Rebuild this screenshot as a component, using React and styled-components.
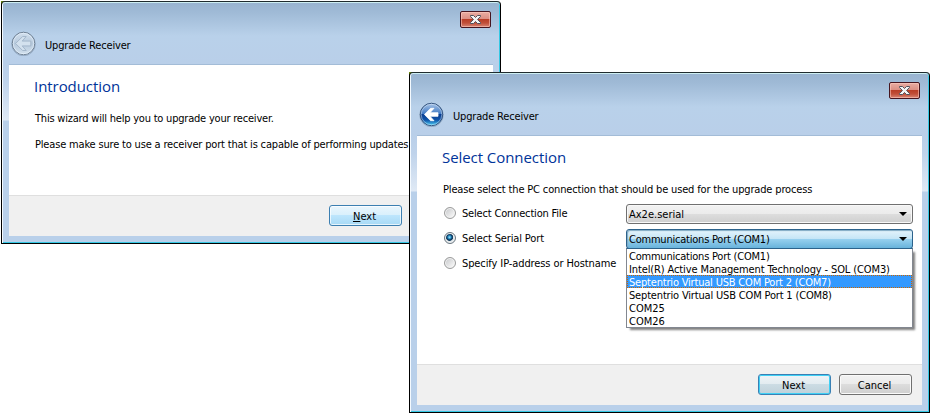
import React from "react";
import styled, { createGlobalStyle, css } from "styled-components";

const GlobalStyle = createGlobalStyle`
  * { box-sizing: border-box; }
  body { margin: 0; background: #fff; overflow: hidden; }
`;

const Desktop = styled.main`
  position: relative;
  width: 931px;
  height: 414px;
  font: 11px/14px "DejaVu Sans Condensed", "DejaVu Sans", sans-serif;
  color: #000;
  white-space: pre;
`;

const Window = styled.section`
  position: absolute;
  left: ${(p) => p.$x}px;
  top: ${(p) => p.$y}px;
  width: ${(p) => p.$w}px;
  height: ${(p) => p.$h}px;
  display: flex;
  flex-direction: column;
  padding: 0 7px 7px;
  border: 1px solid #000;
  border-top-color: #1f2b2e;
  border-radius: 4px 4px 0 0;
  background: linear-gradient(
    #98b3d0 0,
    #9fbad6 10px,
    #b9d1ea 34px,
    #b9cfe9 62px,
    #bfd3eb 80px,
    #dfe9f5 118px,
    #b9d0ea 119px
  );
  box-shadow: inset 1px 0 #f4faff, inset 0 1px #cdeef2, inset -1px 0 #35c8e4, inset 0 -1px #35c8e4;
`;

const CornerPatch = styled.i`
  position: absolute;
  left: ${(p) => p.$x}px;
  top: ${(p) => p.$y}px;
  width: 4px;
  height: 4px;
  background: #71900d;
`;

const Header = styled.header`
  display: flex;
  flex-direction: column;
  height: 62px;
  padding: 9px 2px 0;
`;

const CloseButton = styled.button`
  align-self: flex-end;
  display: grid;
  place-items: center;
  width: 31px;
  height: 17px;
  padding: 0;
  border: 1px solid #46151f;
  border-radius: 2px;
  background: linear-gradient(#e9ada3 0, #dc8f83 7px, #b83c25 7px, #c14f39 11px, #d88676 100%);
  box-shadow: inset 0 0 0 1px rgba(255, 205, 195, 0.55);
`;

const TitleRow = styled.div`
  display: flex;
  align-items: center;
  gap: 9px;
  height: 25px;
  margin-top: 3px;
`;

const Text = styled.span`
  letter-spacing: ${(p) => p.$track || 0}px;
`;

const Title = styled(Text)`
  margin-top: 4px;
`;

const Client = styled.div`
  flex: 1;
  display: flex;
  flex-direction: column;
  border-top: 1px solid #a3bcd7;
  background: #fff;
`;

const Page = styled.div`
  flex: 1;
  padding: 10px 0 0 26px;
`;

const Heading = styled.h1`
  margin: 0 0 15px -1px;
  font: 400 15px/22px "Open Sans", "Noto Sans", sans-serif;
  letter-spacing: -0.06px;
  color: #003399;
`;

const Paragraph = styled.p`
  margin: 0 0 ${(p) => p.$gap}px;
  letter-spacing: ${(p) => p.$track}px;
`;

const Footer = styled.footer`
  display: flex;
  justify-content: flex-end;
  gap: 8px;
  height: 41px;
  padding: 9px ${(p) => p.$right}px 0 0;
  border-top: 1px solid #dfdfdf;
  background: #f0f0f0;
`;

const buttonLooks = {
  hot: css`
    border-color: #3c7fb1;
    background: linear-gradient(#eaf6fd 0, #d9f0fc 9px, #bee6fd 9px, #a7d9f5 100%);
    box-shadow: inset 0 0 0 1px rgba(255, 255, 255, 0.7);
  `,
  focused: css`
    border-color: #3a80b4;
    background: linear-gradient(#eff4f7 0, #e2ebf0 9px, #ccdce4 9px, #bfd1da 100%);
    box-shadow: inset 0 0 0 1px #3fd0f5;
  `,
  plain: css`
    border-color: #707070;
    background: linear-gradient(#f2f2f2 0, #ebebeb 9px, #dddddd 9px, #cfcfcf 100%);
    box-shadow: inset 0 0 0 1px #fafafa;
  `,
};

const Button = styled.button`
  width: 73px;
  height: 21px;
  padding: 2px 2px 0 0;
  border: 1px solid;
  border-radius: 3px;
  font: inherit;
  line-height: 16px;
  color: #000;
  ${(p) => buttonLooks[p.$look]}
`;

const Mnemonic = styled.span`
  text-decoration: underline 1px;
  text-underline-offset: 1px;
`;

const FormRow = styled.div`
  display: grid;
  grid-template-columns: 182px 287px;
  height: 25px;
  margin-left: 1px;
`;

const RadioLabel = styled.label`
  display: flex;
  gap: 6px;
  height: 18px;
  align-items: center;

  ${Text} {
    margin-top: 2px;
  }
`;

const Radio = styled.span`
  width: 12px;
  height: 12px;
  border: 1px solid ${(p) => (p.$on ? "#6a7780" : "#9a9b9b")};
  border-radius: 50%;
  background: ${(p) =>
    p.$on
      ? "radial-gradient(circle at 45% 42%, #a9e4fb 0, #2f9bd0 1.4px, #0b3c66 2.6px, #173e5e 3.3px, #dfe6ea 4px)"
      : "linear-gradient(135deg, #c3c5c8, #f4f4f4 80%)"};
  box-shadow: inset 0 0 0 1px #f3f3f3;
`;

const ComboWrap = styled.div`
  position: relative;
  height: 20px;
`;

const Combo = styled.div`
  display: flex;
  align-items: center;
  justify-content: space-between;
  height: 20px;
  padding: 0 5px 0 2px;
  border: 1px solid ${(p) => (p.$open ? "#2c628b" : "#707070")};
  border-radius: 3px;
  background: ${(p) =>
    p.$open
      ? "linear-gradient(#e5f4fc 0, #c4e5f6 9px, #98d1ef 9px, #68b3db 100%)"
      : "linear-gradient(#f2f2f2 0, #ebebeb 9px, #dddddd 9px, #cfcfcf 100%)"};
  box-shadow: ${(p) => (p.$open ? "inset 1px 1px 1px #7fa9c2" : "inset 0 0 0 1px #f8f8f8")};

  ${Text} {
    margin-top: 2px;
  }
`;

const Arrow = styled.i`
  border: 4px solid transparent;
  border-top-color: #000;
  border-bottom: 0;
`;

const Options = styled.ul`
  position: absolute;
  top: 19px;
  left: 0;
  z-index: 1;
  width: 287px;
  height: 80px;
  margin: 0;
  padding: 0;
  list-style: none;
  border: 1px solid #828790;
  border-top-color: #2c628b;
  background: #fff;
  box-shadow: 3px 3px 2px -1px rgba(0, 0, 0, 0.5);
`;

const Option = styled.li`
  height: 13px;
  padding-left: 2px;
  line-height: 15px;
  letter-spacing: ${(p) => p.$track}px;
  ${(p) =>
    p.$selected &&
    css`
      color: #fff;
      background: #3399ff;
      outline: 1px dotted #cc6600;
      outline-offset: -1px;
    `}
`;

const OPTIONS = [
  ["Communications Port (COM1)", -0.22],
  ["Intel(R) Active Management Technology - SOL (COM3)", -0.12],
  ["Septentrio Virtual USB COM Port 2 (COM7)", -0.19],
  ["Septentrio Virtual USB COM Port 1 (COM8)", -0.17],
  ["COM25", 0],
  ["COM26", 0],
];

function BackIcon({ active }) {
  const id = active ? "orb-active" : "orb-idle";
  return (
    <svg width="25" height="25" viewBox="0 0 25 25">
      <defs>
        <linearGradient id={id} x1="0" y1="0" x2="0" y2="1">
          {active ? (
            <>
              <stop offset="0" stopColor="#a9c5e8" />
              <stop offset=".48" stopColor="#3f79c3" />
              <stop offset=".5" stopColor="#0b3e91" />
              <stop offset=".75" stopColor="#0f55aa" />
              <stop offset="1" stopColor="#4fd6fa" />
            </>
          ) : (
            <>
              <stop offset="0" stopColor="#d3e0ee" />
              <stop offset=".5" stopColor="#b7cadd" />
              <stop offset="1" stopColor="#d2e0ed" />
            </>
          )}
        </linearGradient>
      </defs>
      <circle cx="12.5" cy="13" r="11.8" fill="none" stroke="#7f95ad" strokeOpacity=".6" />
      <circle cx="12.5" cy="12.5" r="11.2" fill={`url(#${id})`} stroke={active ? "#31527e" : "#6c7d90"} />
      <circle cx="12.5" cy="12.5" r="10.3" fill="none" stroke="#e8f3ff" strokeOpacity={active ? 0.45 : 0.7} />
      <path
        d={
          active
            ? "M5.4 12.5 11.6 6.3h3.4l-4 4.4h8v3.6h-8l4 4.4h-3.4Z"
            : "M4.6 12.5 11.6 5.5h3.6l-4 4.6h8.6v4.8h-8.6l4 4.6h-3.6Z"
        }
        fill={active ? "#fff" : "#d3e1ee"}
        stroke={active ? "#fff" : "#9aafc4"}
        strokeWidth=".8"
        strokeLinejoin="round"
      />
    </svg>
  );
}

function CloseIcon() {
  return (
    <svg width="13" height="11" viewBox="0 0 13 11">
      <path
        d="M1.5 1.5h3l2 2 2-2h3v1L8.6 5.5l2.9 3v1h-3l-2-2-2 2h-3v-1l2.9-3-2.9-3Z"
        fill="#f5f5f5"
        stroke="#50525c"
        strokeWidth="1"
        strokeLinejoin="round"
      />
    </svg>
  );
}

function Wizard({ x, y, w, h, active, heading, footer, footerRight, children }) {
  return (
    <>
      <CornerPatch $x={x} $y={y} />
      <Window $x={x} $y={y} $w={w} $h={h}>
        <Header>
          <CloseButton aria-label="Close">
            <CloseIcon />
          </CloseButton>
          <TitleRow>
            <BackIcon active={active} />
            <Title $track={-0.17}>Upgrade Receiver</Title>
          </TitleRow>
        </Header>
        <Client>
          <Page>
            <Heading>{heading}</Heading>
            {children}
          </Page>
          <Footer $right={footerRight}>{footer}</Footer>
        </Client>
      </Window>
    </>
  );
}

function RadioOption({ on, track, children }) {
  return (
    <RadioLabel>
      <Radio $on={on} />
      <Text $track={track}>{children}</Text>
    </RadioLabel>
  );
}

export default function App() {
  return (
    <Desktop>
      <GlobalStyle />
      <Wizard
        x={1}
        y={1}
        w={500}
        h={243}
        heading="Introduction"
        footerRight={91}
        footer={
          <Button $look="hot">
            <Mnemonic>N</Mnemonic>ext
          </Button>
        }
      >
        <Paragraph $gap={12} $track={-0.21}>
          This wizard will help you to upgrade your receiver.
        </Paragraph>
        <Paragraph $gap={0} $track={-0.175}>
          Please make sure to use a receiver port that is capable of performing updates
        </Paragraph>
      </Wizard>
      <Wizard
        x={409}
        y={72}
        w={521}
        h={341}
        active
        heading="Select Connection"
        footerRight={10}
        footer={
          <>
            <Button $look="focused">Next</Button>
            <Button $look="plain">Cancel</Button>
          </>
        }
      >
        <Paragraph $gap={7} $track={-0.16}>
          Please select the PC connection that should be used for the upgrade process
        </Paragraph>
        <FormRow>
          <RadioOption track={-0.18}>Select Connection File</RadioOption>
          <Combo>
            <Text>Ax2e.serial</Text>
            <Arrow />
          </Combo>
        </FormRow>
        <FormRow>
          <RadioOption on track={-0.14}>
            Select Serial Port
          </RadioOption>
          <ComboWrap>
            <Combo $open>
              <Text $track={-0.22}>Communications Port (COM1)</Text>
              <Arrow />
            </Combo>
            <Options>
              {OPTIONS.map(([name, track], i) => (
                <Option key={name} $track={track} $selected={i === 2}>
                  {name}
                </Option>
              ))}
            </Options>
          </ComboWrap>
        </FormRow>
        <FormRow>
          <RadioOption track={-0.1}>Specify IP-address or Hostname</RadioOption>
        </FormRow>
      </Wizard>
    </Desktop>
  );
}
